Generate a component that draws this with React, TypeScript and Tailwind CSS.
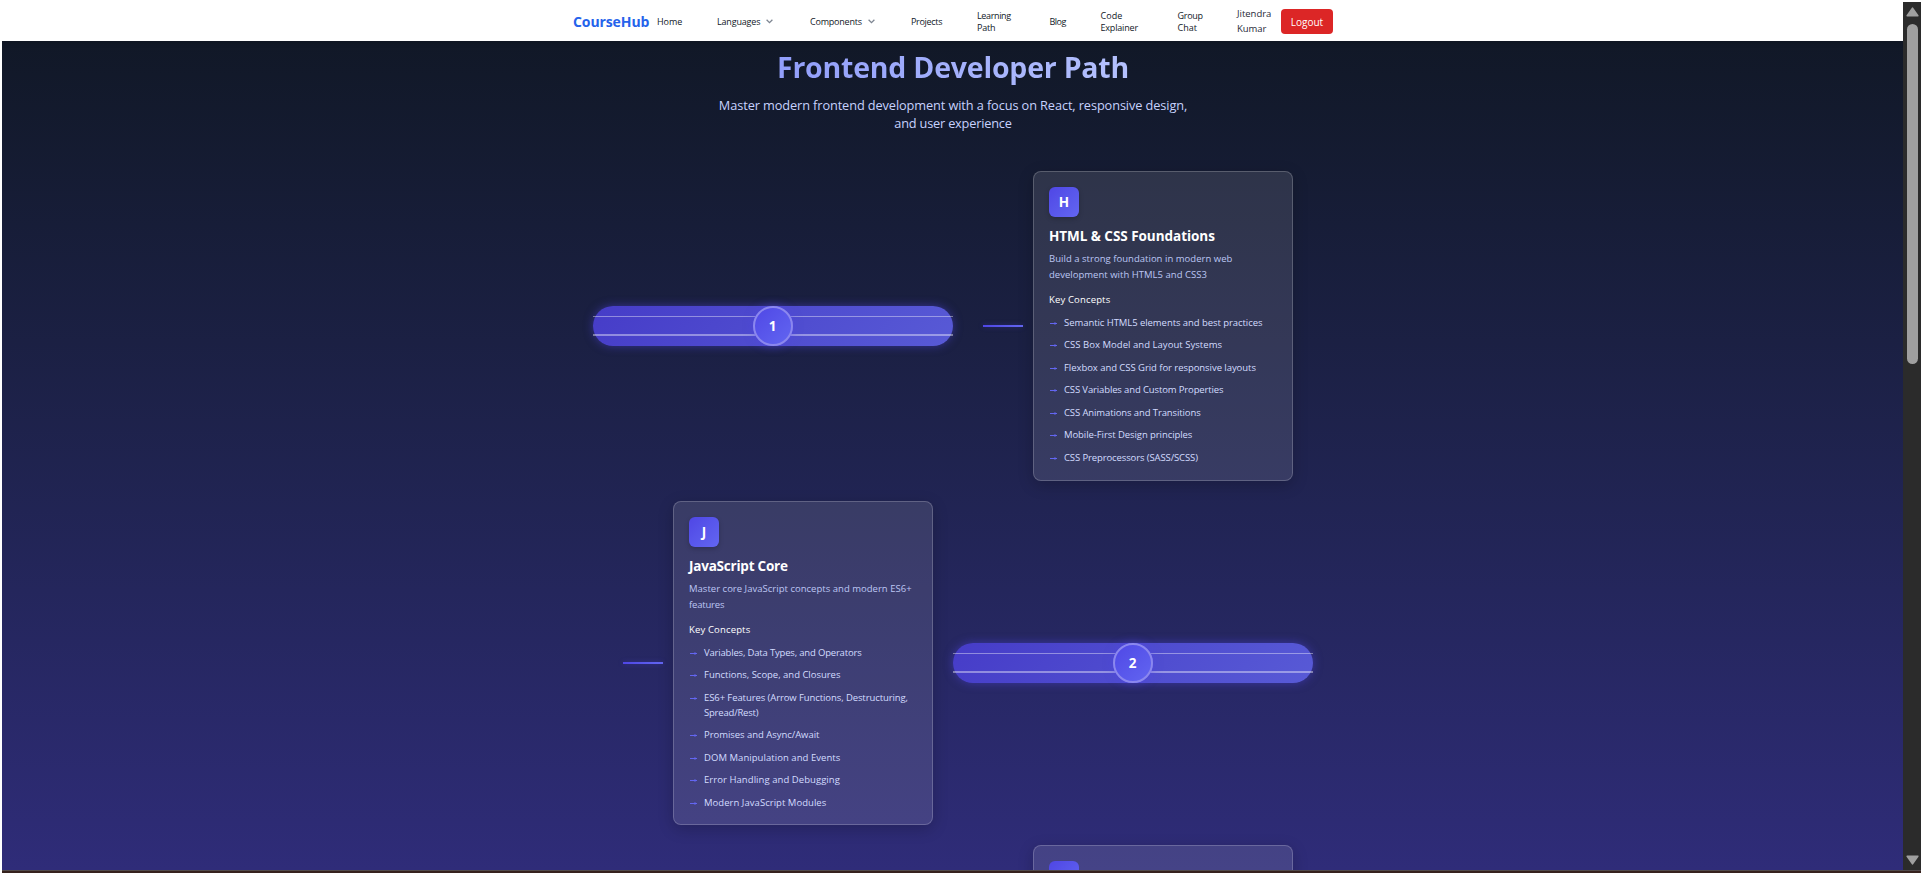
import React from 'react';

type Line = { text: string; tracking: string };

const l = (text: string, tracking: string): Line => ({ text, tracking });

type Step = {
  id: number;
  letter: string;
  title: Line;
  description: Line[];
  concepts: Line[][];
};

const steps: Step[] = [
  {
    id: 1,
    letter: 'H',
    title: l('HTML & CSS Foundations', 'tracking-[-0.04px]'),
    description: [
      l('Build a strong foundation in modern web', 'tracking-[0.03px]'),
      l('development with HTML5 and CSS3', 'tracking-[0.02px]'),
    ],
    concepts: [
      [l('Semantic HTML5 elements and best practices', 'tracking-[-0.06px]')],
      [l('CSS Box Model and Layout Systems', 'tracking-[0.04px]')],
      [l('Flexbox and CSS Grid for responsive layouts', 'tracking-[-0.05px]')],
      [l('CSS Variables and Custom Properties', 'tracking-[-0.13px]')],
      [l('CSS Animations and Transitions', 'tracking-[-0.11px]')],
      [l('Mobile-First Design principles', 'tracking-[-0.07px]')],
      [l('CSS Preprocessors (SASS/SCSS)', 'tracking-[-0.11px]')],
    ],
  },
  {
    id: 2,
    letter: 'J',
    title: l('JavaScript Core', 'tracking-[-0.22px]'),
    description: [
      l('Master core JavaScript concepts and modern ES6+', 'tracking-[0.02px]'),
      l('features', 'tracking-[-0.18px]'),
    ],
    concepts: [
      [l('Variables, Data Types, and Operators', 'tracking-[-0.18px]')],
      [l('Functions, Scope, and Closures', 'tracking-[-0.02px]')],
      [
        l('ES6+ Features (Arrow Functions, Destructuring,', 'tracking-[-0.09px]'),
        l('Spread/Rest)', 'tracking-[-0.2px]'),
      ],
      [l('Promises and Async/Await', 'tracking-[-0.04px]')],
      [l('DOM Manipulation and Events', 'tracking-[0.05px]')],
      [l('Error Handling and Debugging', 'tracking-[0.06px]')],
      [l('Modern JavaScript Modules', 'tracking-[0.04px]')],
    ],
  },
];

type NavItem = { width: string; lines: Line[]; menu?: boolean };

const navItems: NavItem[] = [
  { width: 'w-[60px]', lines: [l('Home', 'tracking-[-0.04px]')] },
  { width: 'w-[93px]', lines: [l('Languages', 'tracking-[-0.17px]')], menu: true },
  { width: 'w-[101px]', lines: [l('Components', 'tracking-[-0.21px]')], menu: true },
  { width: 'w-[66px]', lines: [l('Projects', 'tracking-[-0.3px]')] },
  { width: 'w-[72.5px]', lines: [l('Learning', 'tracking-[-0.35px]'), l('Path', 'tracking-[-0.22px]')] },
  { width: 'w-[51px]', lines: [l('Blog', 'tracking-[-0.5px]')] },
  { width: 'w-[77px]', lines: [l('Code', 'tracking-[0.05px]'), l('Explainer', 'tracking-[-0.18px]')] },
  { width: 'w-[59.5px]', lines: [l('Group', 'tracking-[-0.27px]'), l('Chat', 'tracking-[0.02px]')] },
];

function Lines({ lines }: { lines: Line[] }) {
  return (
    <span className="flex flex-col items-start">
      {lines.map((line) => (
        <span key={line.text} className={line.tracking}>
          {line.text}
        </span>
      ))}
    </span>
  );
}

function Chevron() {
  return (
    <svg className="ml-[6px] h-[5px] w-[7px]" viewBox="0 0 7 5" fill="none">
      <path d="M0.6 0.8 3.5 3.6 6.4 0.8" stroke="#7d8591" strokeWidth="1.3" />
    </svg>
  );
}

function Navbar() {
  return (
    <nav className="relative z-10 flex h-[39px] shrink-0 items-center bg-white pl-[571px] text-[9px] leading-[12px] text-[#111827] shadow-[0_2px_5px_rgba(0,0,0,0.15)]">
      <span className="w-[84px] text-[14px] leading-[20px] font-bold tracking-[-0.1px] text-[#2563eb]">
        CourseHub
      </span>
      {navItems.map((item) => (
        <a key={item.lines[0].text} className={`flex shrink-0 items-center ${item.width}`}>
          <Lines lines={item.lines} />
          {item.menu && <Chevron />}
        </a>
      ))}
      <div className="flex w-[44px] flex-col pb-px text-[9.5px] leading-[15px] text-[#1f2937]">
        <span className="tracking-[-0.02px]">Jitendra</span>
        <span className="tracking-[-0.06px]">Kumar</span>
      </div>
      <button className="h-[25px] w-[52px] rounded-[4px] bg-[#dc2626] text-[10px] text-white">
        Logout
      </button>
    </nav>
  );
}

function ArrowBullet() {
  return (
    <svg className="mt-[5px] mr-[7px] ml-px h-[7px] w-[7px] shrink-0" viewBox="0 0 7 7" fill="none">
      <path d="M0 3.5H7" stroke="#6366f1" strokeWidth="1" />
      <path d="M4.5 2 6.9 3.5 4.5 5Z" fill="#6366f1" />
    </svg>
  );
}

function Connector() {
  return (
    <div className="h-[2px] w-[40px] bg-linear-to-r from-[#4f46e5] to-[#6366f1] shadow-[0_0_5px_rgba(79,70,229,0.35)]" />
  );
}

function Pipe({ id }: { id: number }) {
  return (
    <div className="relative flex h-[40px] w-[360px] items-center justify-center">
      <div className="absolute inset-0 rounded-full bg-linear-135 from-[#463cc8] to-[#585ad6] shadow-[0_0_10px_rgba(79,70,229,0.5)]" />
      <div className="absolute inset-x-0 top-[10px] h-px bg-white/40" />
      <div className="absolute inset-x-0 top-[28px] h-[2px] bg-white/40" />
      <div className="relative flex h-[40px] w-[40px] items-center justify-center rounded-full bg-linear-135 from-[#4f46e5] to-[#6366f1] shadow-[0_0_10px_rgba(79,70,229,0.5)]">
        <div className="absolute inset-0 rounded-full border-2 border-[#8b87ee]" />
        <span className="relative pr-px text-[13.5px] leading-[20px] font-bold text-white">{id}</span>
      </div>
    </div>
  );
}

function Card({ step, height }: { step: Step; height: string }) {
  return (
    <article
      className={`w-[260px] shrink-0 rounded-[8px] border border-white/20 bg-white/11 p-[15px] text-[9.5px] shadow-[0_4px_16px_rgba(0,0,0,0.2)] ${height}`}
    >
      <div className="flex h-[30px] w-[30px] items-center justify-center rounded-[6px] bg-linear-135 from-[#4f46e5] to-[#6366f1] text-[13.5px] leading-[20px] font-bold text-white shadow-[0_2px_5px_rgba(0,0,0,0.2)]">
        {step.letter}
      </div>
      <h2
        className={`mt-[9px] text-[13.5px] leading-[20px] font-bold whitespace-nowrap text-white ${step.title.tracking}`}
      >
        {step.title.text}
      </h2>
      <div className="mt-[4.5px] leading-[16px] whitespace-nowrap text-[#bcc6f4]">
        <Lines lines={step.description} />
      </div>
      <h3 className="mt-[9px] leading-[15px] tracking-[0.15px] text-white">Key Concepts</h3>
      <ul className="mt-[8px] flex flex-col gap-[7.5px] leading-[15px] whitespace-nowrap text-[#d3dcff]">
        {step.concepts.map((lines) => (
          <li key={lines[0].text} className="flex items-start">
            <ArrowBullet />
            <Lines lines={lines} />
          </li>
        ))}
      </ul>
    </article>
  );
}

function Scrollbar() {
  return (
    <aside className="flex w-[18px] shrink-0 flex-col items-center bg-[#2b2b2b] pt-[5px] pb-[5px]">
      <svg className="h-[10px] w-[13px]" viewBox="0 0 13 10">
        <path d="M6.5 1.2 11.8 8.8H1.2Z" fill="#9f9f9f" stroke="#9f9f9f" strokeWidth="1.6" strokeLinejoin="round" />
      </svg>
      <div className="mt-[7px] h-[340px] w-[11px] rounded-full bg-[#9f9f9f]" />
      <svg className="mt-auto h-[10px] w-[13px]" viewBox="0 0 13 10">
        <path d="M6.5 8.8 11.8 1.2H1.2Z" fill="#9f9f9f" stroke="#9f9f9f" strokeWidth="1.6" strokeLinejoin="round" />
      </svg>
    </aside>
  );
}

export default function App() {
  return (
    <div className="flex h-[875px] w-[1923px] flex-col overflow-hidden bg-white p-[2px] font-['Open_Sans','Noto_Sans',sans-serif]">
      <div className="flex h-[868px] shrink-0">
        <div className="flex w-[1901px] shrink-0 flex-col overflow-hidden">
          <Navbar />
          <main className="h-[829px] overflow-hidden bg-linear-to-b from-[#111827] to-[#2f2c79] pt-[8px] pl-[591px]">
            <div className="w-[720px]">
              <header className="text-center">
                <h1 className="bg-linear-to-r from-[#818cf8] to-[#c7d2fe] bg-clip-text text-[28.5px] leading-[36px] font-bold tracking-[-0.22px] text-transparent">
                  Frontend Developer Path
                </h1>
                <p className="mt-[11px] text-[12.75px] leading-[18px] text-[#c7d2fe]">
                  <span className="block tracking-[-0.1px]">
                    Master modern frontend development with a focus on React, responsive design,
                  </span>
                  <span className="block tracking-[-0.2px]">and user experience</span>
                </p>
              </header>
              <section className="mt-[39px] flex flex-col gap-[20px]">
                <div className="flex items-center">
                  <Pipe id={1} />
                  <div className="flex items-center gap-[10px] pl-[30px]">
                    <Connector />
                    <Card step={steps[0]} height="h-[310px]" />
                  </div>
                </div>
                <div className="flex items-center">
                  <div className="flex w-[360px] items-center gap-[10px] pl-[30px]">
                    <Connector />
                    <Card step={steps[1]} height="h-[324px]" />
                  </div>
                  <Pipe id={2} />
                </div>
                <div className="flex justify-end pr-[20px]">
                  <div className="h-[310px] w-[260px] rounded-[8px] border border-white/20 bg-white/11 p-[15px] shadow-[0_4px_16px_rgba(0,0,0,0.2)]">
                    <div className="h-[30px] w-[30px] rounded-[6px] bg-linear-135 from-[#4f46e5] to-[#6366f1]" />
                  </div>
                </div>
              </section>
            </div>
          </main>
        </div>
        <Scrollbar />
      </div>
      <div className="h-[3px] w-[1919px] shrink-0 border-t border-[#514a4a] bg-[#36221e]" />
    </div>
  );
}
